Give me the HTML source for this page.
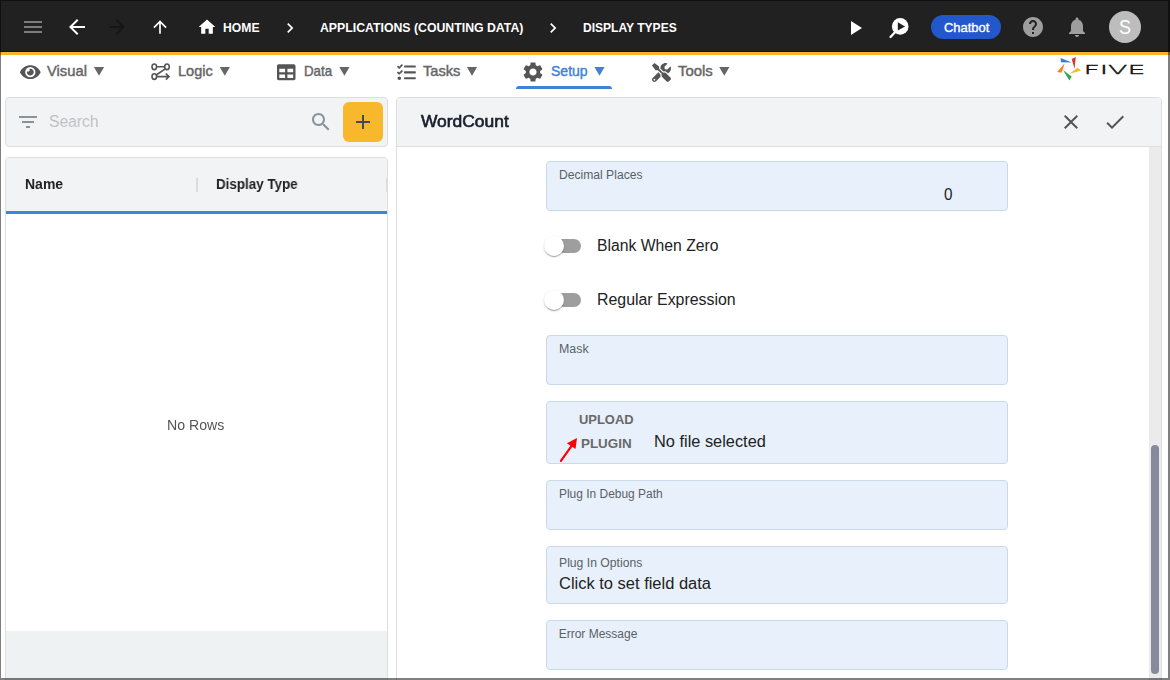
<!DOCTYPE html>
<html lang="en">
<head>
<meta charset="utf-8">
<title>Five - Display Types</title>
<style>
html,body{margin:0;padding:0;}
body{width:1170px;height:680px;overflow:hidden;background:#fff;font-family:"Liberation Sans",sans-serif;}
#app{position:relative;width:1170px;height:680px;overflow:hidden;background:#fff;}
#app div,#app span,#app svg{position:absolute;box-sizing:border-box;}
.sec{position:absolute;left:0;top:0;width:1170px;height:680px;display:block;}
.t{white-space:pre;line-height:1;transform-origin:0 50%;}
#topbar{left:0;top:0;width:1170px;height:51px;background:#212121;}
#navy{left:0;top:51px;width:1170px;height:1px;background:#11151c;}
#orange{left:0;top:52px;width:1170px;height:3px;background:#f7b62a;}
#frame{left:0;top:0;width:1170px;height:680px;border-style:solid;border-color:rgba(0,0,0,.5);border-width:1px 2px 2px 1px;pointer-events:none;}
.ic{overflow:visible;}
#chatbot{left:931px;top:15px;width:70px;height:24px;border-radius:12px;background:#2358cc;}
#avatar{left:1109px;top:11px;width:32px;height:32px;border-radius:16px;background:#bdbdbd;}
#underline{left:516px;top:86px;width:96px;height:3px;background:#3f83d6;border-radius:3px 3px 0 0;}
#searchbox{left:5px;top:97px;width:383px;height:50px;background:#f2f3f5;border:1px solid #dedede;border-radius:4px;}
#addbtn{left:343px;top:102px;width:40px;height:40px;border-radius:6px;background:#f7b82b;}
#ltable{left:5px;top:157px;width:383px;height:530px;background:#fff;border:1px solid #dedede;border-radius:4px 4px 0 0;overflow:hidden;}
#lthead{left:0;top:0;width:381px;height:54px;background:#f2f3f5;}
#ltblue{left:0;top:53px;width:381px;height:3px;background:#3f84d8;}
#ltfoot{left:0;top:473px;width:381px;height:60px;background:#eef2f3;}
.coldiv{width:2px;height:14px;background:#dcdcdc;top:20px;}
#rpanel{left:396px;top:97px;width:766px;height:600px;background:#fff;border:1px solid #dedede;border-radius:4px 4px 0 0;overflow:hidden;}
#rphead{left:0;top:0;width:764px;height:49px;background:#f2f3f5;border-bottom:1px solid #dedede;}
#sbtrack{left:752px;top:49px;width:12px;height:560px;background:#ebebeb;}
#sbthumb{left:754px;top:347px;width:8px;height:229px;background:#858b9d;border-radius:4px;}
.fld{left:546px;width:462px;background:#e8f1fb;border:1px solid #c8d9ea;border-radius:4px;}
.track{width:34px;height:14px;border-radius:7px;background:#9e9e9e;}
.thumb{width:20px;height:20px;border-radius:10px;background:#fff;box-shadow:0 2px 1px -1px rgba(0,0,0,.2),0 1px 1px 0 rgba(0,0,0,.14),0 1px 3px 0 rgba(0,0,0,.12);}

</style>
</head>
<body>
<div id="app">
<header class="sec">
<div id="topbar"></div>
<div id="navy"></div>
<div id="orange"></div>

<!-- top bar icons -->
<svg class="ic" style="left:21px;top:15px" width="24" height="24" viewBox="0 0 24 24"><path fill="#7c7c7c" d="M3 18h18v-2H3v2zm0-5h18v-2H3v2zm0-7v2h18V6H3z"/></svg>
<svg class="ic" style="left:65px;top:15px" width="24" height="24" viewBox="0 0 24 24"><path fill="#fff" d="M20 11H7.830l5.590-5.590L12 4l-8 8 8 8 1.410-1.410L7.830 13H20v-2z"/></svg>
<svg class="ic" style="left:105px;top:15px" width="24" height="24" viewBox="0 0 24 24"><path fill="#161616" d="M12 4l-1.410 1.410L16.170 11H4v2h12.170l-5.580 5.590L12 20l8-8z"/></svg>
<svg class="ic" style="left:150px;top:17px" width="20" height="20" viewBox="0 0 24 24"><path fill="#fff" d="M4 12l1.410 1.410L11 7.830V20h2V7.830l5.580 5.590L20 12l-8-8-8 8z"/></svg>
<svg class="ic" style="left:197px;top:17px" width="20" height="20" viewBox="0 0 24 24"><path fill="#fff" d="M10 20v-6h4v6h5v-8h3L12 3 2 12h3v8z"/></svg>
<svg class="ic" style="left:280px;top:17.500px" width="20" height="20" viewBox="0 0 24 24"><path fill="#fff" d="M10 6L8.590 7.410 13.170 12l-4.580 4.590L10 18l6-6z"/></svg>
<svg class="ic" style="left:543px;top:17.500px" width="20" height="20" viewBox="0 0 24 24"><path fill="#fff" d="M10 6L8.590 7.410 13.170 12l-4.580 4.590L10 18l6-6z"/></svg>
<svg class="ic" style="left:843px;top:16px" width="24" height="24" viewBox="0 0 24 24"><path fill="#fff" d="M8 5v14l11-7z"/></svg>
<!-- search-play icon -->
<svg class="ic" style="left:887px;top:16px" width="24" height="24" viewBox="0 0 24 24"><circle cx="13.200" cy="10.400" r="8.300" fill="#fff"/><path d="M8.500 15.800L3.500 21" stroke="#fff" stroke-width="2.300" stroke-linecap="round"/><path fill="#212121" d="M10.800 6.300v8.200l7.200-4.100z"/></svg>
<div id="chatbot"></div>
<svg class="ic" style="left:1021px;top:15px" width="24" height="24" viewBox="0 0 24 24"><path fill="#9e9e9e" d="M12 2C6.480 2 2 6.480 2 12s4.480 10 10 10 10-4.480 10-10S17.520 2 12 2zm1 17h-2v-2h2v2zm2.070-7.750l-.9.920C13.450 12.900 13 13.500 13 15h-2v-.5c0-1.100.45-2.100 1.170-2.830l1.240-1.260c.37-.36.590-.86.590-1.410 0-1.100-.9-2-2-2s-2 .9-2 2H8c0-2.210 1.790-4 4-4s4 1.790 4 4c0 .88-.36 1.680-.93 2.250z"/></svg>
<svg class="ic" style="left:1065px;top:15px" width="24" height="24" viewBox="0 0 24 24"><path fill="#9e9e9e" d="M12 22c1.100 0 2-.9 2-2h-4c0 1.100.89 2 2 2zm6-6v-5c0-3.070-1.640-5.640-4.500-6.320V4c0-.83-.67-1.500-1.500-1.500s-1.500.67-1.500 1.500v.68C7.630 5.360 6 7.920 6 11v5l-2 2v1h16v-1l-2-2z"/></svg>
<div id="avatar"></div>
<span class="t" style="left:223.20px;top:21px;font-size:13px;font-weight:700;color:#fff;transform:scaleX(0.9359);">HOME</span>
<span class="t" style="left:319.80px;top:21px;font-size:13px;font-weight:700;color:#fff;transform:scaleX(0.9451);">APPLICATIONS (COUNTING DATA)</span>
<span class="t" style="left:583.40px;top:21px;font-size:13px;font-weight:700;color:#fff;transform:scaleX(0.9263);">DISPLAY TYPES</span>
<span class="t" style="left:943.57px;top:21px;font-size:13px;font-weight:400;color:#fff;transform:scaleX(0.9957);-webkit-text-stroke:0.35px #fff;">Chatbot</span>
<span class="t" style="left:1118.70px;top:17px;font-size:20px;font-weight:400;color:#fff;transform:scaleX(0.9);">S</span>
</header>
<nav class="sec">
<!-- menu bar icons -->
<svg class="ic" style="left:19.700px;top:62.500px" width="20.600" height="18.300" viewBox="0 0 576 512"><path fill="#555" d="M572.520 241.400C518.290 135.590 410.930 64 288 64S57.680 135.640 3.480 241.410a32.350 32.350 0 0 0 0 29.190C57.710 376.410 165.070 448 288 448s230.320-71.640 284.520-177.410a32.350 32.350 0 0 0 0-29.190zM288 400a144 144 0 1 1 144-144 143.930 143.930 0 0 1-144 144zm0-240a95.310 95.310 0 0 0-25.310 3.790 47.850 47.850 0 0 1-66.900 66.900A95.780 95.780 0 1 0 288 160z"/></svg>
<!-- logic icon -->
<svg class="ic" style="left:150.500px;top:63.200px" width="20" height="18" viewBox="0 0 20 18"><g fill="none" stroke="#555" stroke-width="1.600"><ellipse cx="3.300" cy="3.800" rx="2.300" ry="2.800"/><ellipse cx="16" cy="3.800" rx="2.300" ry="2.800"/><ellipse cx="3.300" cy="13.600" rx="2.300" ry="2.800"/><path d="M5.600 3.800H13.700M14.300 5.800L5.200 12M5.600 13.600H17.600M14.900 10.600L18 13.600L14.900 16.600"/></g></svg>
<svg class="ic" style="left:276.600px;top:62.700px" width="18.500" height="18.500" viewBox="0 0 512 512"><path fill="#555" d="M464 32H48C21.490 32 0 53.490 0 80v352c0 26.510 21.490 48 48 48h416c26.510 0 48-21.490 48-48V80c0-26.510-21.490-48-48-48zM224 416H64v-96h160v96zm0-160H64v-96h160v96zm224 160H288v-96h160v96zm0-160H288v-96h160v96z"/></svg>
<svg class="ic" style="left:396.600px;top:62.900px" width="18.800" height="18.800" viewBox="0 0 512 512"><path fill="#555" d="M139.610 35.500a12 12 0 0 0-17 0L58.930 98.810l-22.700-22.120a12 12 0 0 0-17 0L3.530 92.410a12 12 0 0 0 0 17l47.590 47.400a12.780 12.780 0 0 0 17.610 0l15.590-15.620L156.520 69a12.090 12.090 0 0 0 .09-17zm0 159.190a12 12 0 0 0-17 0l-63.680 63.720-22.700-22.100a12 12 0 0 0-17 0L3.530 252a12 12 0 0 0 0 17L51 316.500a12.770 12.770 0 0 0 17.600 0l15.700-15.690 72.200-72.220a12 12 0 0 0 .09-16.900zM64 368c-26.49 0-48.59 21.5-48.59 48S37.53 464 64 464a48 48 0 0 0 0-96zM204 68h296a12 12 0 0 1 12 12v32a12 12 0 0 1-12 12H204a12 12 0 0 1-12-12v-32a12 12 0 0 1 12-12zM204 228h296a12 12 0 0 1 12 12v32a12 12 0 0 1-12 12H204a12 12 0 0 1-12-12v-32a12 12 0 0 1 12-12zM204 388h296a12 12 0 0 1 12 12v32a12 12 0 0 1-12 12H204a12 12 0 0 1-12-12v-32a12 12 0 0 1 12-12z"/></svg>
<svg class="ic" style="left:521px;top:60px" width="24" height="24" viewBox="0 0 24 24"><path fill="#555" d="M19.140 12.940c.04-.3.060-.61.060-.94 0-.32-.02-.64-.07-.94l2.030-1.580c.18-.14.230-.41.120-.61l-1.920-3.320c-.12-.22-.37-.29-.59-.22l-2.390.96c-.5-.38-1.030-.7-1.620-.94l-.36-2.540c-.04-.24-.24-.41-.48-.41h-3.840c-.24 0-.43.170-.47.410l-.36 2.540c-.59.240-1.130.57-1.620.94l-2.390-.96c-.22-.08-.47 0-.59.220L2.740 8.870c-.12.210-.08.470.12.610l2.030 1.580c-.05.300-.09.630-.09.940s.02.640.07.940l-2.030 1.580c-.18.140-.23.410-.12.610l1.920 3.320c.12.220.37.290.59.220l2.390-.96c.5.380 1.030.7 1.620.94l.36 2.540c.05.240.24.410.48.410h3.840c.24 0 .44-.17.470-.41l.36-2.540c.59-.24 1.130-.56 1.620-.94l2.390.96c.22.080.47 0 .59-.22l1.920-3.320c.12-.22.070-.47-.12-.61l-2.010-1.580zM12 15.600c-1.980 0-3.600-1.620-3.600-3.600s1.620-3.600 3.600-3.600 3.600 1.620 3.600 3.600-1.620 3.600-3.600 3.600z"/></svg>
<svg class="ic" style="left:651.500px;top:62.600px" width="19" height="19" viewBox="0 0 512 512"><path fill="#555" d="M501.100 395.700L384 278.600c-23.100-23.100-57.600-27.600-85.400-13.900L192 158.100V96L64 0 0 64l96 128h62.100l106.600 106.600c-13.600 27.800-9.200 62.300 13.900 85.400l117.100 117.100c14.600 14.600 38.200 14.600 52.700 0l52.700-52.700c14.500-14.600 14.500-38.200 0-52.700zM331.700 225c28.300 0 54.900 11 74.900 31l19.400 19.400c15.800-6.900 30.800-16.500 43.800-29.500 37.100-37.100 49.700-89.300 37.900-136.700-2.200-9-13.500-12.100-20.100-5.500l-74.400 74.400-67.900-11.300L334 98.900l74.400-74.400c6.600-6.600 3.400-17.900-5.700-20.200-47.400-11.700-99.600.9-136.600 37.900-28.500 28.500-41.900 66.100-41.200 103.600l82.100 82.100c8.100-1.900 16.500-2.900 24.700-2.900zm-103.900 82l-56.700-56.700L18.700 402.800c-25 25-25 65.500 0 90.500s65.500 25 90.500 0l123.600-123.600c-7.600-19.900-9.900-41.600-5-62.700zM64 472c-13.200 0-24-10.800-24-24 0-13.300 10.700-24 24-24s24 10.700 24 24c0 13.200-10.700 24-24 24z"/></svg>
<!-- dropdown triangles -->
<svg class="ic" style="left:0;top:0" width="1170" height="100" viewBox="0 0 1170 100"><g fill="#666"><path d="M93.900 67h10.200l-5.100 8.800z"/><path d="M219.700 67h10.200l-5.100 8.800z"/><path d="M339.300 67h10.200l-5.100 8.800z"/><path d="M466.900 67h10.200l-5.100 8.800z"/><path d="M719.200 67h10.200l-5.100 8.800z"/></g><path fill="#3f83d6" d="M594.400 67h10.200l-5.100 8.800z"/></svg>
<div id="underline"></div>

<!-- FIVE logo -->
<svg class="ic" style="left:1050px;top:55px" width="110" height="30" viewBox="1050 55 110 30">
<path fill="#3879d6" d="M1060.600 58L1071.700 62.500L1061 62.200z"/>
<path fill="#de3232" d="M1075.800 57L1071.700 58.900L1074.500 68.700z"/>
<path fill="#f6b826" d="M1077.600 67.800L1081 70.500L1069.500 73.700z"/>
<path fill="#36a452" d="M1063 70L1071.700 76.500L1069.400 80.600z"/>
<path fill="#fb7f26" d="M1064.700 63.200L1057.200 72.100L1061.600 72.700z"/>
<text transform="translate(1083.400 73.700) scale(2.220 1)" font-family="'DejaVu Sans Light','DejaVu Sans',sans-serif" font-weight="200" font-size="12.800" fill="#111" stroke="#111" stroke-width="0.350">FIVE</text>
</svg>
<span class="t" style="left:47.12px;top:63px;font-size:15px;font-weight:400;color:#666;transform:scaleX(0.9840);-webkit-text-stroke:0.45px #666;">Visual</span>
<span class="t" style="left:177.92px;top:63px;font-size:15px;font-weight:400;color:#666;transform:scaleX(0.9691);-webkit-text-stroke:0.45px #666;">Logic</span>
<span class="t" style="left:304.12px;top:63px;font-size:15px;font-weight:400;color:#666;transform:scaleX(0.8884);-webkit-text-stroke:0.45px #666;">Data</span>
<span class="t" style="left:423.23px;top:63px;font-size:15px;font-weight:400;color:#666;transform:scaleX(0.9766);-webkit-text-stroke:0.45px #666;">Tasks</span>
<span class="t" style="left:551.12px;top:63px;font-size:15px;font-weight:400;color:#3f83d6;transform:scaleX(0.9349);-webkit-text-stroke:0.45px #3f83d6;">Setup</span>
<span class="t" style="left:678.33px;top:63px;font-size:15px;font-weight:400;color:#666;transform:scaleX(0.9923);-webkit-text-stroke:0.45px #666;">Tools</span>
</nav>
<aside class="sec">
<!-- left panel -->
<div id="searchbox"></div>
<svg class="ic" style="left:16px;top:110px" width="24" height="24" viewBox="0 0 24 24"><path fill="#8a929c" d="M10 18h4v-2h-4v2zM3 6v2h18V6H3zm3 7h12v-2H6v2z"/></svg>
<svg class="ic" style="left:309px;top:110px" width="24" height="24" viewBox="0 0 24 24"><path fill="#8a929c" d="M15.500 14h-.79l-.28-.27C15.410 12.590 16 11.110 16 9.500 16 5.910 13.090 3 9.500 3S3 5.910 3 9.500 5.910 16 9.500 16c1.610 0 3.090-.59 4.230-1.570l.27.280v.79l5 4.990L20.490 19l-4.990-5zm-6 0C7.010 14 5 11.990 5 9.500S7.010 5 9.500 5 14 7.010 14 9.500 11.990 14 9.500 14z"/></svg>
<div id="addbtn"></div>
<svg class="ic" style="left:351px;top:110px" width="24" height="24" viewBox="0 0 24 24"><path fill="#444a55" d="M19 13h-6v6h-2v-6H5v-2h6V5h2v6h6v2z"/></svg>
<div id="ltable">
  <div id="lthead"></div>
  <div class="coldiv" style="left:190px"></div>
  <div class="coldiv" style="left:380px"></div>
  <div id="ltblue"></div>
  <div id="ltfoot"></div>
</div>
<span class="t" style="left:48.80px;top:114px;font-size:16px;font-weight:400;color:#bcbec2;transform:scaleX(0.9797);will-change:transform;">Search</span>
<span class="t" style="left:25.00px;top:177px;font-size:14px;font-weight:700;color:#222;transform:scaleX(0.9948);will-change:transform;">Name</span>
<span class="t" style="left:215.70px;top:177px;font-size:14px;font-weight:700;color:#222;transform:scaleX(0.9569);will-change:transform;">Display Type</span>
<span class="t" style="left:166.70px;top:418px;font-size:14px;font-weight:400;color:#555;transform:scaleX(1.0097);will-change:transform;">No Rows</span>
</aside>
<main class="sec">
<!-- right panel -->
<div id="rpanel">
  <div id="rphead"></div>
  <div id="sbtrack"></div>
  <div id="sbthumb"></div>
</div>
<svg class="ic" style="left:1059px;top:110px" width="24" height="24" viewBox="0 0 24 24"><path fill="#555" d="M19 6.410L17.590 5 12 10.590 6.410 5 5 6.410 10.590 12 5 17.590 6.410 19 12 13.410 17.590 19 19 17.590 13.410 12z"/></svg>
<svg class="ic" style="left:1103px;top:110px" width="24" height="24" viewBox="0 0 24 24"><path fill="#555" d="M9 16.170L4.830 12l-1.420 1.410L9 19 21 7l-1.410-1.410z"/></svg>

<div class="fld" style="top:161px;height:50px"></div>
<div class="track" style="left:547px;top:239px"></div><div class="thumb" style="left:544px;top:236px"></div>
<div class="track" style="left:547px;top:293px"></div><div class="thumb" style="left:544px;top:290px"></div>
<div class="fld" style="top:335px;height:50px"></div>
<div class="fld" style="top:401px;height:63px"></div>
<svg class="ic" style="left:555px;top:432px" width="30" height="34" viewBox="555 432 30 34"><path d="M560.900 460.900L572 445.400" stroke="#fb0007" stroke-width="2.200" stroke-linecap="round" fill="none"/><path fill="#fb0007" d="M577 437.900L566.900 443.300L575.500 448.900z"/></svg>
<div class="fld" style="top:480px;height:50px"></div>
<div class="fld" style="top:546px;height:58px"></div>
<div class="fld" style="top:620px;height:50px"></div>
<span class="t" style="left:421.43px;top:113px;font-size:17px;font-weight:400;color:#181e2c;transform:scaleX(1.0241);-webkit-text-stroke:0.65px #181e2c;will-change:transform;">WordCount</span>
<span class="t" style="left:558.60px;top:169px;font-size:12px;font-weight:400;color:#5a5f66;transform:scaleX(1.0096);">Decimal Places</span>
<span class="t" style="left:944.00px;top:187px;font-size:16px;font-weight:400;color:#222;transform:scaleX(0.9544);">0</span>
<span class="t" style="left:597.20px;top:238px;font-size:16px;font-weight:400;color:#222;transform:scaleX(0.9828);">Blank When Zero</span>
<span class="t" style="left:597.20px;top:292px;font-size:16px;font-weight:400;color:#222;transform:scaleX(0.9929);">Regular Expression</span>
<span class="t" style="left:558.70px;top:343px;font-size:12px;font-weight:400;color:#5a5f66;transform:scaleX(1.0317);">Mask</span>
<span class="t" style="left:579.20px;top:413px;font-size:13px;font-weight:700;color:#686868;transform:scaleX(0.9947);">UPLOAD</span>
<span class="t" style="left:581.40px;top:437px;font-size:13px;font-weight:700;color:#686868;transform:scaleX(1.0300);">PLUGIN</span>
<span class="t" style="left:653.50px;top:433px;font-size:16.5px;font-weight:400;color:#222;transform:scaleX(0.9916);">No file selected</span>
<span class="t" style="left:558.70px;top:488px;font-size:12px;font-weight:400;color:#5a5f66;transform:scaleX(0.9956);">Plug In Debug Path</span>
<span class="t" style="left:558.70px;top:557px;font-size:12px;font-weight:400;color:#5a5f66;transform:scaleX(1.0154);">Plug In Options</span>
<span class="t" style="left:559.30px;top:576px;font-size:16px;font-weight:400;color:#222;transform:scaleX(1.0296);">Click to set field data</span>
<span class="t" style="left:558.70px;top:628px;font-size:12px;font-weight:400;color:#5a5f66;">Error Message</span>
</main>
<div id="frame"></div>
</div>
</body>
</html>
